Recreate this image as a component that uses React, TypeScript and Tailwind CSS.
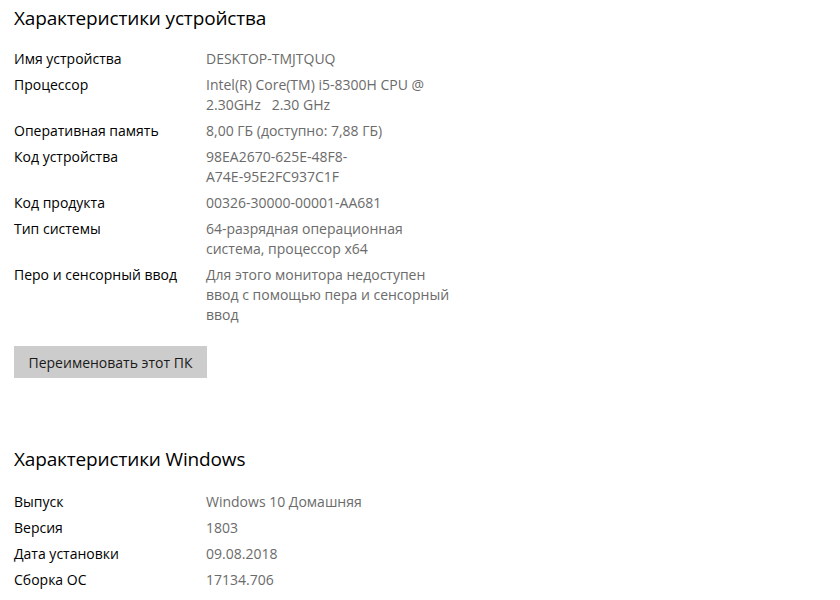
const font = { fontFamily: '"Open Sans", "Noto Sans", sans-serif' }

type Row = { label: string; value: string[] }

const device: Row[] = [
  { label: 'Имя устройства', value: ['DESKTOP-TMJTQUQ'] },
  { label: 'Процессор', value: ['Intel(R) Core(TM) i5-8300H CPU @', '2.30GHz   2.30 GHz'] },
  { label: 'Оперативная память', value: ['8,00 ГБ (доступно: 7,88 ГБ)'] },
  { label: 'Код устройства', value: ['98EA2670-625E-48F8-', 'A74E-95E2FC937C1F'] },
  { label: 'Код продукта', value: ['00326-30000-00001-AA681'] },
  { label: 'Тип системы', value: ['64-разрядная операционная', 'система, процессор x64'] },
  {
    label: 'Перо и сенсорный ввод',
    value: ['Для этого монитора недоступен', 'ввод с помощью пера и сенсорный', 'ввод'],
  },
]

const windows: Row[] = [
  { label: 'Выпуск', value: ['Windows 10 Домашняя'] },
  { label: 'Версия', value: ['1803'] },
  { label: 'Дата установки', value: ['09.08.2018'] },
  { label: 'Сборка ОС', value: ['17134.706'] },
]

function InfoRows({ rows }: { rows: Row[] }) {
  return (
    <div className="flex flex-col gap-[6px]">
      {rows.map(r => (
        <div key={r.label} className="flex text-[14px] leading-[20px]">
          <div className="w-[192px] shrink-0 text-[#000000]">{r.label}</div>
          <div className="text-[#6b6b6b] whitespace-pre">
            {r.value.map((line, i) => (
              <div key={i}>{line}</div>
            ))}
          </div>
        </div>
      ))}
    </div>
  )
}

export default function App() {
  return (
    <div className="w-[840px] h-[600px] bg-white overflow-hidden pl-[14px]" style={font}>
      <h2 className="pt-[4px] text-[19px] leading-[28px] tracking-[-0.15px] text-black">
        Характеристики устройства
      </h2>
      <div className="mt-[17px]">
        <InfoRows rows={device} />
      </div>
      <button className="mt-[21px] w-[193px] h-[32px] bg-[#cccccc] text-[14px] text-[#1a1a1a]">
        Переименовать этот ПК
      </button>
      <h2 className="mt-[67px] text-[19px] leading-[28px] tracking-[-0.15px] text-black">
        Характеристики Windows
      </h2>
      <div className="mt-[19px]">
        <InfoRows rows={windows} />
      </div>
    </div>
  )
}
